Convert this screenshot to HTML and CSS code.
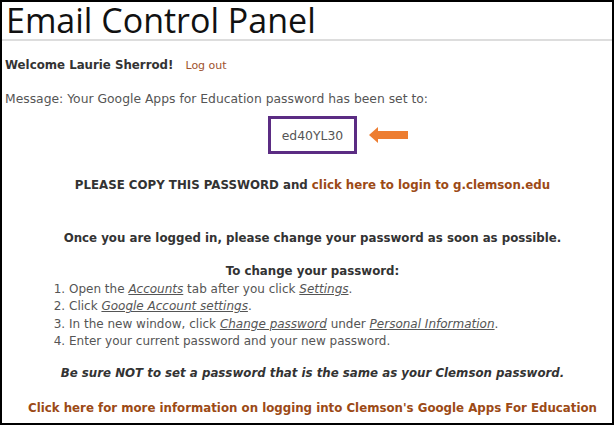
FILE: index.html
```html
<!DOCTYPE html>
<html>
<head>
<meta charset="utf-8">
<link rel="stylesheet" href="styles.css">
</head>
<body>
<div class="frame">
  <h1 class="title">Email Control Panel</h1>
  <div class="content">
    <p class="welcome"><strong>Welcome Laurie Sherrod!</strong><a class="link" href="#">Log out</a></p>
    <p class="message">Message: Your Google Apps for Education password has been set to:</p>
    <div class="pw-row">
      <div class="pw-box">ed40YL30</div>
      <svg class="arrow" width="40" height="16" viewBox="0 0 40 16"><polygon points="0,8 9,0 9,4 39,4 39,12 9,12 9,16" fill="#ed7d31"/></svg>
    </div>
    <p class="center bold copy">PLEASE COPY THIS PASSWORD and <a class="blink" href="#">click here to login to g.clemson.edu</a></p>
    <p class="center bold once">Once you are logged in, please change your password as soon as possible.</p>
    <p class="center bold to">To change your password:</p>
    <ol class="steps">
      <li>Open the <u><i>Accounts</i></u> tab after you click <u><i>Settings</i></u>.</li>
      <li>Click <u><i>Google Account settings</i></u>.</li>
      <li>In the new window, click <u><i>Change password</i></u> under <u><i>Personal Information</i></u>.</li>
      <li>Enter your current password and your new password.</li>
    </ol>
    <p class="center bold warn"><i>Be sure NOT to set a password that is the same as your Clemson password.</i></p>
    <p class="center bold more"><a class="blink" href="#">Click here for more information on logging into Clemson's Google Apps For Education</a></p>
  </div>
</div>
</body>
</html>
```
FILE: styles.css
```css
html, body { margin: 0; padding: 0; background: #fff; }
body { font-family: "DejaVu Sans", Verdana, sans-serif; font-size: 12.35px; color: #555; }
.frame {
  width: 610px; height: 421px;
  border: 2px solid #000;
}
.title {
  margin: 0;
  padding: 0 0 0 4px;
  font-family: "Open Sans", "Noto Sans", sans-serif;
  font-weight: 400;
  font-size: 34px;
  line-height: 37px;
  color: #111;
  border-bottom: 2px solid #ddd;
}
.content { padding: 0 0 0 3px; }
p { margin: 0; }
.welcome { margin-top: 17px; height: 15px; line-height: 15px; }
.welcome strong { color: #333; font-size: 11.8px; }
.link { color: #a0522d; text-decoration: none; margin-left: 12px; font-size: 11px; }
.message { margin-top: 19px; line-height: 15px; }
.pw-row { display: flex; justify-content: center; align-items: center; gap: 12px; margin-top: 9px; padding-left: 60px; }
.pw-box {
  width: 83px; height: 32px;
  border: 3px solid #5b2c83;
  display: flex; align-items: center; justify-content: center;
  color: #555;
  font-size: 12.4px;
}
.center { text-align: center; padding-left: 8px; }
.bold { font-weight: bold; color: #333; font-size: 11.8px; }
.blink { color: #9c4a16; text-decoration: none; font-weight: bold; }
.copy { margin-top: 24px; line-height: 15px; }
.once { margin-top: 38px; line-height: 15px; }
.to { margin-top: 18px; line-height: 15px; }
.steps { margin: 2px 0 0 0; padding-left: 64px; line-height: 17.3px; font-size: 12px; }
.steps u { text-underline-offset: 1px; }
.warn { margin-top: 16px; line-height: 15px; }
.more { margin-top: 20px; line-height: 15px; }
```
